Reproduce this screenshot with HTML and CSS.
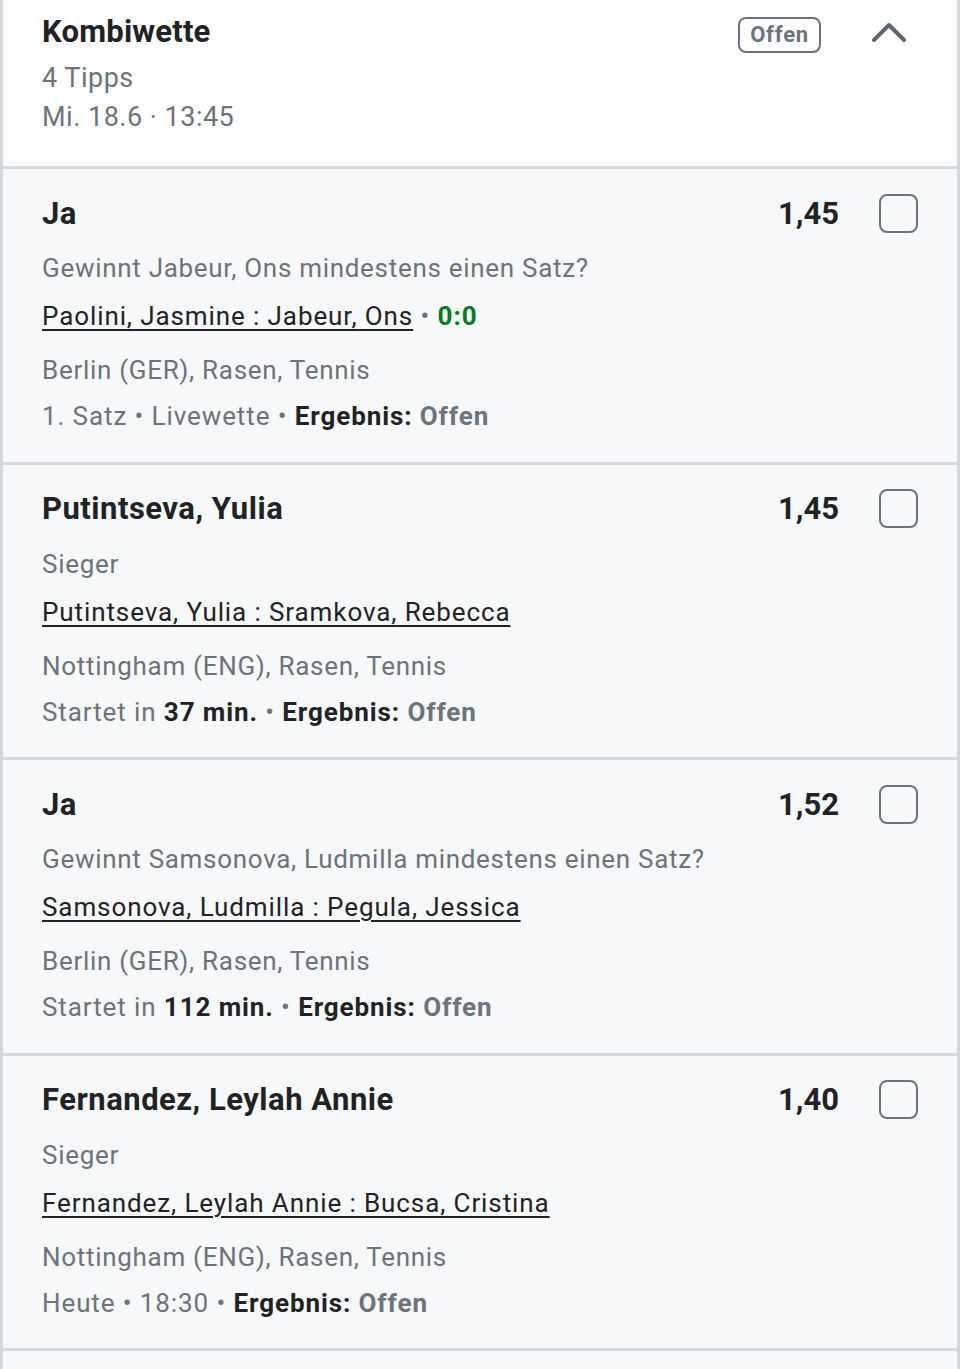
FILE: index.html
```html
<!DOCTYPE html>
<html lang="de">
<head>
<meta charset="utf-8">
<link rel="stylesheet" href="styles.css">
</head>
<body>
<div class="card">
  <div class="head">
    <div class="head-info">
      <div class="head-title">Kombiwette</div>
      <div class="head-sub">4 Tipps</div>
      <div class="head-sub">Mi. 18.6 · 13:45</div>
    </div>
    <div class="badge">Offen</div>
    <svg class="chevron" width="36" height="24" viewBox="0 0 36 24"><path d="M3 21 L18 6 L33 21" fill="none" stroke="#5f666c" stroke-width="4" stroke-linecap="round" stroke-linejoin="round"/></svg>
  </div>

  <div class="tip">
    <div class="tip-top">
      <div class="tip-title">Ja</div>
      <div class="odds">1,45</div>
      <div class="check"></div>
    </div>
    <div class="line market">Gewinnt Jabeur, Ons mindestens einen Satz?</div>
    <div class="line match"><a>Paolini, Jasmine : Jabeur, Ons</a> <span class="dot">•</span> <span class="score">0:0</span></div>
    <div class="line loc">Berlin (GER), Rasen, Tennis</div>
    <div class="line status">1. Satz <span class="dot">•</span> Livewette <span class="dot">•</span> <b>Ergebnis:</b> <span class="res">Offen</span></div>
  </div>

  <div class="tip">
    <div class="tip-top">
      <div class="tip-title">Putintseva, Yulia</div>
      <div class="odds">1,45</div>
      <div class="check"></div>
    </div>
    <div class="line market">Sieger</div>
    <div class="line match"><a>Putintseva, Yulia : Sramkova, Rebecca</a></div>
    <div class="line loc">Nottingham (ENG), Rasen, Tennis</div>
    <div class="line status">Startet in <b>37 min.</b> <span class="dot">•</span> <b>Ergebnis:</b> <span class="res">Offen</span></div>
  </div>

  <div class="tip">
    <div class="tip-top">
      <div class="tip-title">Ja</div>
      <div class="odds">1,52</div>
      <div class="check"></div>
    </div>
    <div class="line market">Gewinnt Samsonova, Ludmilla mindestens einen Satz?</div>
    <div class="line match"><a>Samsonova, Ludmilla : Pegula, Jessica</a></div>
    <div class="line loc">Berlin (GER), Rasen, Tennis</div>
    <div class="line status">Startet in <b>112 min.</b> <span class="dot">•</span> <b>Ergebnis:</b> <span class="res">Offen</span></div>
  </div>

  <div class="tip">
    <div class="tip-top">
      <div class="tip-title">Fernandez, Leylah Annie</div>
      <div class="odds">1,40</div>
      <div class="check"></div>
    </div>
    <div class="line market">Sieger</div>
    <div class="line match"><a>Fernandez, Leylah Annie : Bucsa, Cristina</a></div>
    <div class="line loc">Nottingham (ENG), Rasen, Tennis</div>
    <div class="line status">Heute <span class="dot">•</span> 18:30 <span class="dot">•</span> <b>Ergebnis:</b> <span class="res">Offen</span></div>
  </div>
  <div class="tip tip-empty"></div>
</div>
</body>
</html>
```

FILE: styles.css
```css
* { box-sizing: border-box; }
html, body { margin: 0; padding: 0; background: #ffffff; }
body {
  font-family: Roboto, "Liberation Sans", sans-serif;
  color: #1f2326;
  width: 960px;
  height: 1369px;
  overflow: hidden;
}
.card {
  border-left: 3px solid #d3d7db;
  border-right: 3px solid #d3d7db;
  width: 960px;
}
.head {
  background: #ffffff;
  display: flex;
  align-items: flex-start;
  padding: 12px 0 0 39px;
  height: 169px;
  border-bottom: 3px solid #d6d9dd;
}
.head-info { flex: 1; }
.head-title {
  font-size: 31px;
  font-weight: 700;
  letter-spacing: 0.2px;
  line-height: 40px;
  color: #1f2326;
}
.head-sub {
  font-size: 27px;
  letter-spacing: 0.5px;
  line-height: 40px;
  color: #6c737a;
  margin-top: 6px;
}
.head-sub + .head-sub { margin-top: -1px; }
.badge {
  margin-top: 5px;
  border: 2px solid #6c737a;
  border-radius: 8px;
  height: 36px;
  padding: 0 10px;
  font-size: 22px;
  font-weight: 700;
  letter-spacing: 0.8px;
  color: #6c737a;
  line-height: 32px;
}
.chevron { margin: 7px 50px 0 50px; }
.tip {
  background: #f7f8f9;
  height: 295.5px;
  border-bottom: 3px solid #d6d9dd;
  padding: 19px 0 0 39px;
}
.tip-empty { height: 40px; border-bottom: none; }
.tip-top {
  display: flex;
  align-items: center;
  height: 50px;
}
.tip-title {
  flex: 1;
  font-size: 31px;
  font-weight: 700;
  letter-spacing: 0.5px;
  color: #1f2326;
}
.odds {
  font-size: 31px;
  font-weight: 700;
  letter-spacing: 0;
  color: #1f2326;
}
.check {
  width: 39px;
  height: 39px;
  border: 2px solid #6c737a;
  border-radius: 8px;
  margin: 0 39px 0 40px;
}
.line {
  font-size: 26px;
  letter-spacing: 0.7px;
  color: #6c737a;
  line-height: 30px;
}
.market { margin-top: 15px; }
.match { margin-top: 18px; color: #1f2326; letter-spacing: 0.9px; }
.match a { text-decoration: underline; text-underline-offset: 4px; text-decoration-thickness: 2px; }
.loc { margin-top: 24px; }
.status { margin-top: 16px; letter-spacing: 0.9px; }
.status b { color: #1f2326; font-weight: 700; }
.dot { color: #6c737a; }
.score { color: #0a7a23; font-weight: 700; }
.res { font-weight: 700; color: #6c737a; }
```
